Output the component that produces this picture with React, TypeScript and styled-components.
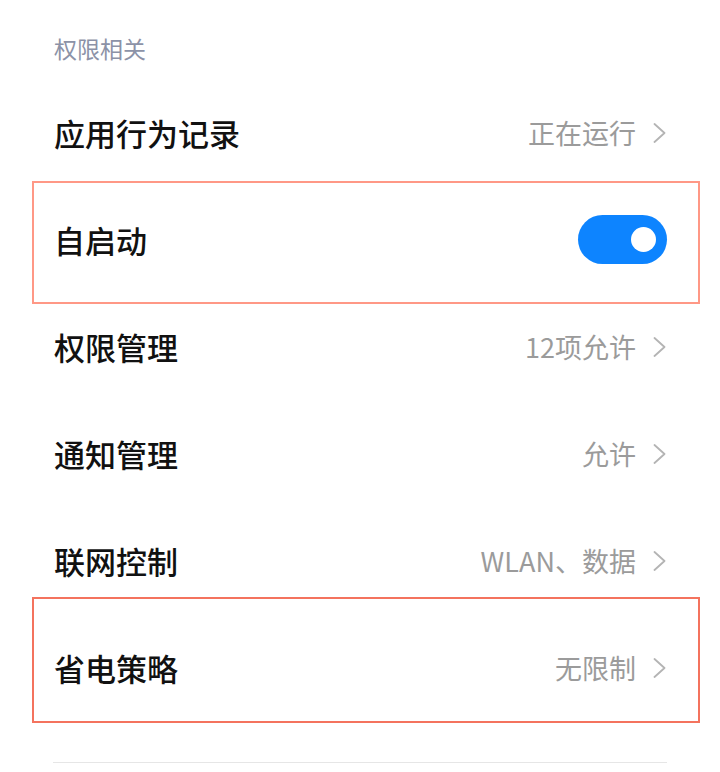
import React, { useState } from "react";
import styled, { createGlobalStyle } from "styled-components";

const GlobalStyle = createGlobalStyle`
  html, body {
    margin: 0;
    padding: 0;
    background: #ffffff;
  }
  body {
    font-family: "Noto Sans CJK SC", "Noto Sans", "Liberation Sans", sans-serif;
    -webkit-font-smoothing: antialiased;
  }
`;

const Page = styled.div`
  width: 720px;
  height: 772px;
  overflow: hidden;
  background: #fff;
`;

const SectionTitle = styled.div`
  padding: 33px 54px 15px;
  font-size: 23px;
  line-height: 31px;
  color: #8c92a7;
`;

const List = styled.ul`
  list-style: none;
  margin: 0;
  padding: 0;
`;

const Row = styled.li`
  position: relative;
  display: flex;
  align-items: center;
  height: 107px;
  padding: 0 54px;
  box-sizing: border-box;
`;

const Highlight = styled.span<{ $top: number; $bottom: number; $color: string }>`
  position: absolute;
  left: 32px;
  right: 20px;
  top: ${({ $top }) => $top}px;
  bottom: ${({ $bottom }) => $bottom}px;
  border: 2px solid ${({ $color }) => $color};
  pointer-events: none;
`;

const Title = styled.span`
  flex: 1;
  font-size: 31px;
  line-height: 42px;
  color: #111;
  font-weight: 500;
`;

const Value = styled.span`
  font-size: 27px;
  line-height: 36px;
  color: #9b9b9b;
`;

const Chevron = styled.svg`
  width: 13px;
  height: 20px;
  margin-left: 17px;
  flex-shrink: 0;
`;

const Toggle = styled.button<{ $on: boolean }>`
  width: 89px;
  height: 49px;
  border: none;
  border-radius: 25px;
  margin-right: -1px;
  background: ${({ $on }) => ($on ? "#0d84ff" : "#d8d8d8")};
  cursor: pointer;
  display: flex;
  align-items: center;
  justify-content: ${({ $on }) => ($on ? "flex-end" : "flex-start")};
  padding: 0 11px;
  box-sizing: border-box;
`;

const Knob = styled.span`
  width: 25px;
  height: 25px;
  border-radius: 50%;
  background: #fff;
`;

const Divider = styled.hr`
  margin: 41px 53px 0;
  border: none;
  border-top: 1px solid #e6e6e6;
`;

function Arrow() {
  return (
    <Chevron viewBox="0 0 13 20">
      <path d="M1.5 1 L11.5 10 L1.5 19" fill="none" stroke="#b4b4b4" strokeWidth="1.8" strokeLinecap="round" strokeLinejoin="round" />
    </Chevron>
  );
}

export default function App() {
  const [autoStart, setAutoStart] = useState(true);

  return (
    <Page>
      <GlobalStyle />
      <SectionTitle>权限相关</SectionTitle>
      <List>
        <Row>
          <Title>应用行为记录</Title>
          <Value>正在运行</Value>
          <Arrow />
        </Row>
        <Row>
          <Highlight $top={-5} $bottom={-11} $color="#ff9886" />
          <Title>自启动</Title>
          <Toggle $on={autoStart} onClick={() => setAutoStart((prev) => !prev)}>
            <Knob />
          </Toggle>
        </Row>
        <Row>
          <Title>权限管理</Title>
          <Value>12项允许</Value>
          <Arrow />
        </Row>
        <Row>
          <Title>通知管理</Title>
          <Value>允许</Value>
          <Arrow />
        </Row>
        <Row>
          <Title>联网控制</Title>
          <Value>WLAN、数据</Value>
          <Arrow />
        </Row>
        <Row>
          <Highlight $top={-17} $bottom={-2} $color="#f4735e" />
          <Title>省电策略</Title>
          <Value>无限制</Value>
          <Arrow />
        </Row>
      </List>
      <Divider />
    </Page>
  );
}
